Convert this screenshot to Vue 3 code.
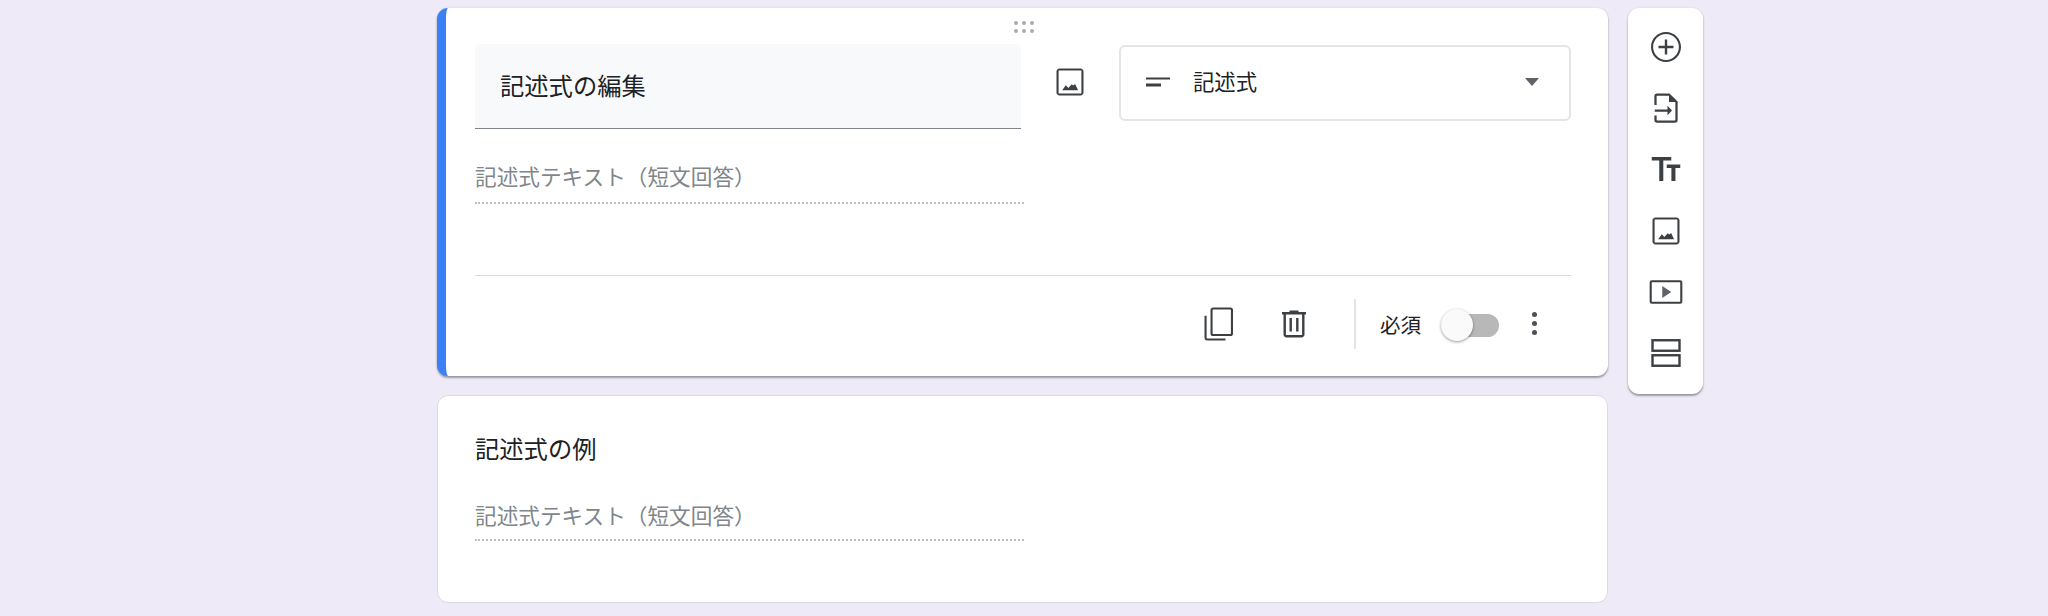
<template>
  <div class="page">
    <div class="column">
      <section class="card card--active">
        <div class="drag">
          <span v-for="n in 6" :key="n" class="drag__dot"></span>
        </div>
        <div class="head">
          <div class="title-field">記述式の編集</div>
          <button class="image-btn">
            <svg class="icon" viewBox="0 0 24 24"><path :d="icons.image" /></svg>
          </button>
          <div class="select">
            <svg class="icon" viewBox="0 0 24 24"><path d="M4 9h16v1.400H4zm0 4h10v2H4z" /></svg>
            <span class="select__label">記述式</span>
            <span class="select__arrow"></span>
          </div>
        </div>
        <div class="answer answer--first">記述式テキスト（短文回答）</div>
        <div class="footer">
          <button class="foot-btn foot-btn--copy">
            <svg class="icon" viewBox="0 0 24 24">
              <rect x="7.700" y="1.700" width="13.600" height="17.600" rx="1" class="line" />
              <path d="M3.700 6.500V21a1.300 1.300 0 0 0 1.300 1.300h12" class="line" />
            </svg>
          </button>
          <button class="foot-btn foot-btn--trash">
            <svg class="icon" viewBox="0 0 24 24"><path d="M15 4V3H9v1H4v1.600h1V19c0 1.100.9 2 2 2h10c1.100 0 2-.9 2-2V5.600h1V4h-5zm2.400 15.400H6.600V5.600h10.800zM9 8h1.600v9H9zm4.400 0H15v9h-1.600z" /></svg>
          </button>
          <span class="foot-sep"></span>
          <span class="required">必須</span>
          <span class="toggle"><span class="toggle__thumb"></span></span>
          <span class="more">
            <i></i><i></i><i></i>
          </span>
        </div>
      </section>

      <section class="card card--preview">
        <div class="preview-title">記述式の例</div>
        <div class="answer answer--second">記述式テキスト（短文回答）</div>
      </section>
    </div>

    <aside class="tools">
      <button v-for="tool in tools" :key="tool.name" class="tool" :title="tool.name">
        <svg class="icon" viewBox="0 0 24 24" v-html="tool.svg"></svg>
      </button>
    </aside>
  </div>
</template>

<script setup>
const icons = {
  image: 'M19.600 4.400v15.200H4.400V4.400h15.200M19 3H5c-1.100 0-2 .9-2 2v14c0 1.100.9 2 2 2h14c1.100 0 2-.9 2-2V5c0-1.100-.9-2-2-2zM6.800 17.500l2.400-3.300 1.700 1.800 2.300-2.500 1 .9 1.200-1 2 4.100z'
}

const tools = [
  {
    name: '質問を追加',
    svg: '<path fill-rule="evenodd" d="M12 2C6.480 2 2 6.480 2 12s4.480 10 10 10 10-4.480 10-10S17.520 2 12 2zm0 18.600c-4.740 0-8.600-3.860-8.600-8.600S7.260 3.400 12 3.400s8.600 3.860 8.600 8.600-3.860 8.600-8.600 8.600z"/><path d="M12.800 7h-1.600v4.200H7v1.600h4.200V17h1.600v-4.200H17v-1.600h-4.200z"/>'
  },
  {
    name: '質問をインポート',
    svg: '<path d="M5 10V4a1 1 0 0 1 1-1h8l5 5v12a1 1 0 0 1-1 1H6a1 1 0 0 1-1-1v-3" fill="none" stroke="currentColor" stroke-width="1.500"/><path d="M14 3v5h5zM4.500 13h8.500v-2.500l3 3.200-3 3.200v-2.400H4.500z"/>'
  },
  {
    name: 'タイトルと説明を追加',
    svg: '<path d="M2.500 4v2.300h5V20h2.700V6.300h5.300V4zm19 5h-9v2.300h3.100V20h2.700v-8.700h3.200z"/>'
  },
  {
    name: '画像を追加',
    svg: '<path d="' + icons.image + '"/>'
  },
  {
    name: '動画を追加',
    svg: '<rect x="1.800" y="4.800" width="20.400" height="14.400" rx=".8" fill="none" stroke="currentColor" stroke-width="1.400"/><path d="M9.500 8v8l6-4z" fill="#5f6368"/>'
  },
  {
    name: 'セクションを追加',
    svg: '<rect x="3" y="3.500" width="18" height="7" fill="none" stroke="currentColor" stroke-width="1.600"/><rect x="3" y="13.500" width="18" height="7" fill="none" stroke="currentColor" stroke-width="1.600"/>'
  }
]
</script>

<style>
body {
  background: #eeeaf8;
}
</style>

<style scoped>
.page {
  display: flex;
  align-items: flex-start;
  gap: 20px;
  box-sizing: border-box;
  width: 2048px;
  height: 616px;
  padding: 8px 0 0 437px;
  overflow: hidden;
  background: #eeeaf8;
  font-family: "Noto Sans CJK JP", "Liberation Sans", sans-serif;
  color: #202124;
}

.column {
  display: flex;
  flex-direction: column;
  gap: 19px;
  width: 1171px;
}

.card {
  position: relative;
  box-sizing: border-box;
  background: #fff;
  border: 1px solid #dadce0;
  border-radius: 11px;
}

.card--active {
  height: 368px;
  padding: 36px 37px 0 29px;
  border: 0;
  border-left: 9px solid #3b80f7;
  box-shadow: 0 2px 2px rgba(60, 64, 67, 0.45), 0 0 2px rgba(60, 64, 67, 0.15);
}

.card--preview {
  height: 208px;
  padding: 0 36px 0 37px;
}

.drag {
  position: absolute;
  top: 13px;
  left: 568px;
  display: grid;
  grid-template-columns: repeat(3, 4px);
  gap: 4px;
}

.drag__dot {
  width: 4px;
  height: 4px;
  border-radius: 50%;
  background: #a9acb0;
}

.head {
  display: flex;
  align-items: flex-start;
}

.title-field {
  box-sizing: border-box;
  display: flex;
  align-items: center;
  width: 546px;
  height: 85px;
  padding: 0 25px 4px 25px;
  background: #f8f9fa;
  border-bottom: 1px solid #80868b;
  border-radius: 5px 5px 0 0;
  font-size: 24.300px;
}

.image-btn {
  display: flex;
  align-items: center;
  justify-content: center;
  width: 36px;
  height: 36px;
  margin: 20px 31px 0 31px;
  padding: 0;
  background: none;
  border: 0;
}

.icon {
  display: block;
  width: 36px;
  height: 36px;
  fill: #3c4043;
  color: #3c4043;
}

.line {
  fill: none;
  stroke: #3c4043;
  stroke-width: 1.400;
}

.select {
  box-sizing: border-box;
  display: flex;
  align-items: center;
  width: 452px;
  height: 76px;
  margin-top: 1px;
  padding: 0 30px 2px 19px;
  border: 2px solid #e4e5e9;
  border-radius: 6px;
}

.select__label {
  margin-left: 17px;
  margin-bottom: 4px;
  font-size: 21.330px;
}

.select__arrow {
  margin-left: auto;
  border-top: 8px solid #5f6368;
  border-left: 7px solid transparent;
  border-right: 7px solid transparent;
}

.answer {
  width: 549px;
  border-bottom: 2px dotted #bdc1c6;
  font-size: 21.650px;
  line-height: 30px;
  color: #80868b;
}

.answer--first {
  margin-top: 32px;
  padding-bottom: 11px;
}

.answer--second {
  margin-top: 35px;
  padding-bottom: 9px;
}

.footer {
  display: flex;
  align-items: center;
  height: 102px;
  margin-top: 71px;
  padding-bottom: 6px;
  box-sizing: border-box;
  border-top: 1px solid #dadce0;
}

.foot-btn {
  padding: 0;
  background: none;
  border: 0;
}

.foot-btn--copy {
  margin-left: auto;
}

.foot-btn--trash {
  margin-left: 40px;
}

.foot-sep {
  width: 2px;
  height: 50px;
  margin-left: 42px;
  background: #e3e4e8;
}

.required {
  margin-left: 24px;
  font-size: 20.500px;
  color: #202124;
}

.toggle {
  position: relative;
  display: block;
  width: 58px;
  height: 23px;
  margin-top: 3px;
  margin-left: 20px;
  background: linear-gradient(to right, transparent 14px, #b8b8b8 14px);
  border-radius: 12px;
}

.toggle__thumb {
  position: absolute;
  top: -5px;
  left: 0;
  width: 32px;
  height: 32px;
  border-radius: 50%;
  background: #fafafa;
  box-shadow: 0 1px 3px rgba(0, 0, 0, 0.4);
}

.more {
  display: flex;
  flex-direction: column;
  gap: 4px;
  margin-left: 33px;
  margin-right: 34px;
}

.more i {
  display: block;
  width: 5px;
  height: 5px;
  border-radius: 50%;
  background: #4d5156;
}

.preview-title {
  padding-top: 35px;
  font-size: 24.300px;
  line-height: 34px;
}

.tools {
  box-sizing: border-box;
  display: flex;
  flex-direction: column;
  width: 75px;
  height: 386px;
  padding: 8px 0 10px;
  background: #fff;
  border-radius: 11px;
  box-shadow: 0 2px 2px rgba(60, 64, 67, 0.45), 0 0 2px rgba(60, 64, 67, 0.15);
}

.tool {
  display: flex;
  flex: 1;
  align-items: center;
  justify-content: center;
  padding: 0;
  background: none;
  border: 0;
}
</style>
